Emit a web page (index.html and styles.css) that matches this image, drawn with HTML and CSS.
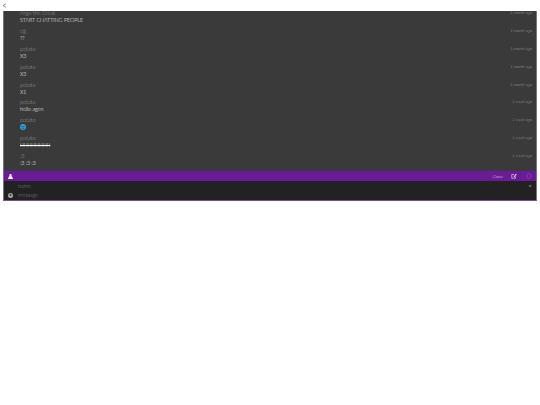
FILE: index.html
```html
<!DOCTYPE html>
<html>
<head>
<meta charset="utf-8">
<title>Chat</title>
<link rel="stylesheet" href="styles.css">
</head>
<body>
<div class="top"><svg class="share" width="5" height="5" viewBox="0 0 10 10"><path d="M8 1.500 2 5l6 3.500" fill="none" stroke="#777" stroke-width="1.500"/></svg></div>
<main class="chat">
  <section class="log">
    <div class="row"><div class="text"><div class="name">Argo the Great</div><div class="msg">START CHATTING PEOPLE</div></div><div class="time">1 month ago</div></div>
    <div class="row"><div class="text"><div class="name">cjjj</div><div class="msg">??</div></div><div class="time">1 month ago</div></div>
    <div class="row"><div class="text"><div class="name">potato</div><div class="msg">X3</div></div><div class="time">1 month ago</div></div>
    <div class="row"><div class="text"><div class="name">potato</div><div class="msg">X3</div></div><div class="time">1 month ago</div></div>
    <div class="row"><div class="text"><div class="name">potato</div><div class="msg">X1</div></div><div class="time">1 month ago</div></div>
    <div class="row"><div class="text"><div class="name">potato</div><div class="msg">hello agen</div></div><div class="time">1 week ago</div></div>
    <div class="row"><div class="text"><div class="name">potato</div><div class="msg"><svg class="emoji" width="6" height="6" viewBox="0 0 12 12"><circle cx="6" cy="6" r="6" fill="#2f9fd8"/><circle cx="4" cy="5" r="1" fill="#123"/><circle cx="8" cy="5" r="1" fill="#123"/><path d="M3.500 9Q6 7 8.500 9" fill="none" stroke="#123"/></svg></div></div><div class="time">1 week ago</div></div>
    <div class="row"><div class="text"><div class="name">potato</div><div class="msg strike">HHHHHHHH</div></div><div class="time">1 week ago</div></div>
    <div class="row"><div class="text"><div class="name">:3</div><div class="msg">:3 :3 :3</div></div><div class="time">1 week ago</div></div>
  </section>
  <div class="bar">
    <svg class="user" width="5" height="5" viewBox="0 0 10 10"><circle cx="5" cy="2.500" r="2.300" fill="#fff"/><path d="M0 10 2 4.500h6L10 10z" fill="#fff"/></svg>
    <span class="close">Close</span>
    <svg class="edit" width="6" height="6" viewBox="0 0 12 12"><path d="M9 7v3.500H1.500V3H6" fill="none" stroke="#eee" stroke-width="1.200"/><path d="M5 7.500 10 1.500l1.500 1.200-5 6z" fill="#eee"/></svg>
    <svg class="circle" width="6" height="6" viewBox="0 0 12 12"><circle cx="6" cy="6" r="4.500" fill="none" stroke="#8b55a8" stroke-width="1.200"/></svg>
  </div>
  <div class="form">
    <div class="line"><span class="hint">name</span><span class="side">◀</span></div>
    <div class="line"><svg class="smile" width="5" height="5" viewBox="0 0 10 10"><circle cx="5" cy="5" r="5" fill="#aaa"/><circle cx="5" cy="4" r="2" fill="#333"/></svg><span class="hint">message</span><span class="side">›</span></div>
  </div>
</main>
</body>
</html>
```
FILE: styles.css
```css
html, body { margin: 0; padding: 0; background: #fff; }
body { font-family: Lato, "Open Sans", sans-serif; font-weight: 300; }
.top { height: 11px; padding-left: 2px; display: flex; align-items: center; }
.chat { width: 534px; margin-left: 3px; box-sizing: border-box; border-left: 1px solid #777; border-right: 1px solid #777; border-bottom: 1px solid #7a4a92; background: #222; }
.log { height: 160px; overflow: hidden; background: #3a3a3a; display: flex; flex-direction: column; justify-content: flex-end; }
.row { height: 17.900px; flex: none; display: flex; justify-content: space-between; padding: 0 4px 0 16px; }
.text { display: flex; flex-direction: column; }
.name { font-size: 5.500px; line-height: 7px; color: #a0a0a0; }
.msg { font-size: 5.300px; line-height: 7px; color: #fff; display: flex; align-items: center; }
.strike { text-decoration: line-through; font-size: 5px; }
.time { font-size: 4px; line-height: 6px; color: #a0a0a0; }
.emoji { display: block; }
.bar { height: 10px; background: #6a1b97; display: flex; align-items: center; padding: 0 4px 0 4px; }
.user { margin-right: auto; }
.close { font-size: 4.500px; color: #ddd; }
.edit { margin-left: 8px; }
.circle { margin-left: 9px; }
.form { height: 19px; background: #222; display: flex; flex-direction: column; }
.line { height: 9.500px; display: flex; align-items: center; padding: 0 5px 0 14px; position: relative; }
.hint { font-size: 5.500px; color: #888; margin-right: auto; }
.side { font-size: 3.500px; color: #666; }
.smile { position: absolute; left: 4px; top: 2px; }
```
